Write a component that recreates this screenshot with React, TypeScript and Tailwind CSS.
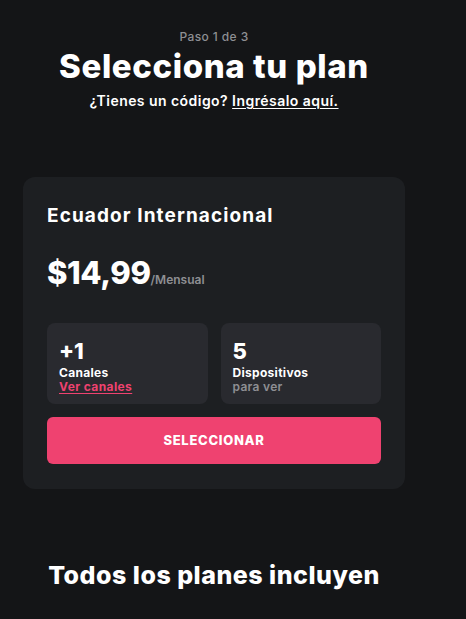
const font = { fontFamily: "Inter, 'Noto Sans', sans-serif" };

export default function App() {
  return (
    <div className="min-h-screen w-full bg-[#141517] text-white" style={font}>
      <div className="w-[428px]">
        {/* Header */}
        <div className="flex flex-col items-center pt-[29px]">
          <p className="text-[12px] font-medium leading-[16px] tracking-[0.4px] text-[#8e8f93]">Paso 1 de 3</p>
          <h1 className="mt-[1px] text-[33px] font-extrabold leading-[40px] tracking-[0.6px]">
            Selecciona tu plan
          </h1>
          <p className="mt-[6px] text-[14px] font-semibold leading-[18px] tracking-[0.45px]">
            ¿Tienes un código? <span className="underline underline-offset-2">Ingrésalo aquí.</span>
          </p>
        </div>

        {/* Plan card */}
        <div className="mx-[23px] mt-[67px] rounded-[12px] bg-[#1d1f22] px-[24px] pb-[25px] pt-[27px]">
          <h2 className="text-[19px] font-bold leading-[24px] tracking-[1.1px]">Ecuador Internacional</h2>
          <div className="mt-[26px] flex items-baseline">
            <span className="text-[31px] font-extrabold leading-[38px] tracking-[-0.4px]">$14,99</span>
            <span className="text-[12px] font-semibold text-[#8e8f93]">/Mensual</span>
          </div>

          <div className="mt-[31px] grid grid-cols-2 gap-[13px]">
            <div className="h-[81px] rounded-[8px] bg-[#292a2f] px-[12px] pt-[16px]">
              <p className="text-[22px] font-extrabold leading-[24px]">+1</p>
              <p className="mt-[3px] text-[12px] font-bold leading-[14px] tracking-[0.3px]">Canales</p>
              <p className="text-[12px] font-bold leading-[14px] tracking-[0.4px] text-[#ef4270] underline underline-offset-2">
                Ver canales
              </p>
            </div>
            <div className="h-[81px] rounded-[8px] bg-[#292a2f] px-[12px] pt-[16px]">
              <p className="text-[22px] font-extrabold leading-[24px]">5</p>
              <p className="mt-[3px] text-[12px] font-bold leading-[14px] tracking-[0.3px]">Dispositivos</p>
              <p className="text-[12px] font-semibold leading-[14px] tracking-[0.3px] text-[#8e8f93]">para ver</p>
            </div>
          </div>

          <button className="mt-[13px] flex h-[47px] w-full items-center justify-center rounded-[6px] bg-[#ef4270] text-[13px] font-extrabold tracking-[0.7px] text-white">
            SELECCIONAR
          </button>
        </div>

        {/* Included features */}
        <h3 className="mt-[71px] text-center text-[25px] font-extrabold leading-[30px] tracking-[0.5px]">
          Todos los planes incluyen
        </h3>
      </div>
    </div>
  );
}
